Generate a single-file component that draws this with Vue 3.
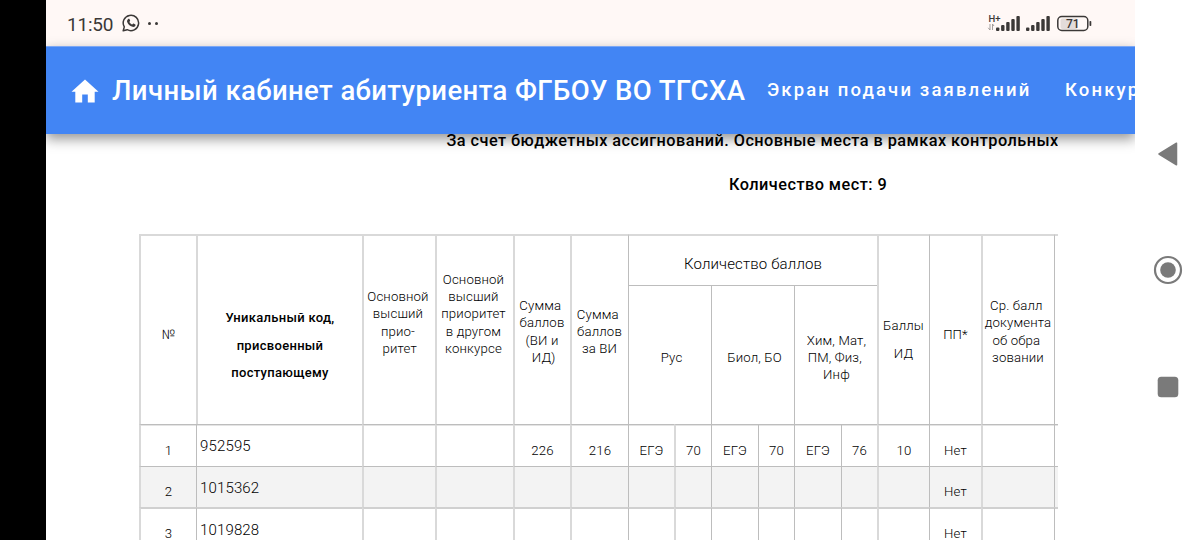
<template>
  <div class="device">
    <div class="cutout"></div>

    <div class="screen">
      <div class="status-bar">
        <span class="clock">11:50</span>
        <svg class="whatsapp" viewBox="0 0 18 18">
          <path d="M1.2 16.8 L2.3 12.9 A7.7 7.7 0 1 1 5.2 15.7 Z" fill="none" stroke="#3b3837" stroke-width="1.5" stroke-linejoin="round" />
          <path d="M6.2 4.9c.4-.4 1-.3 1.2.1l.7 1.6c.1.3 0 .5-.7 1.3.7 1.3 1.6 2.1 2.9 2.7.8-1 1-1.1 1.3-1l1.7.8c.4.2.3 1.3-.2 1.8-.7.7-1.7.9-2.7.6-2.6-.7-4.5-2.6-5.2-4.7-.4-1.3 0-2.4 1-3.2z" fill="#3b3837" />
        </svg>
        <span class="dots"><i></i><i></i></span>

        <svg class="signals" viewBox="0 0 106 22">
          <text x="1.5" y="9.5" class="net">H+</text>
          <path d="M3 12v6M3 18l-1.8-2.2M5.500 18v-6M5.500 12l1.500 2" stroke="#9a9594" stroke-width="0.9" fill="none" />
          <g fill="#3b3837">
            <rect v-for="(bar, i) in bars" :key="'a' + i" :x="9 + i * 5.1" :y="19 - bar" width="3.4" :height="bar" rx="1" />
            <rect v-for="(bar, i) in bars" :key="'b' + i" :x="39 + i * 5.1" :y="19 - bar" width="3.4" :height="bar" rx="1" />
          </g>
          <rect x="73.5" y="6.5" width="17" height="10.5" rx="2" fill="#e3dcda" />
          <rect x="70.8" y="4.5" width="30" height="14" rx="4" fill="none" stroke="#3b3837" stroke-width="1.5" />
          <rect x="102.5" y="9" width="1.8" height="5" rx="0.8" fill="#3b3837" />
          <text x="85.8" y="15.8" class="charge">71</text>
        </svg>
      </div>

      <header class="app-bar">
        <svg class="home" viewBox="0 0 28 24">
          <path d="M14 0.5 L0.5 12.7 H4.3 V23.5 H11.2 V15.5 H16.8 V23.5 H23.7 V12.7 H27.5 Z" fill="#fff" />
        </svg>
        <h1>Личный кабинет абитуриента ФГБОУ ВО ТГСХА</h1>
        <nav>
          <a class="nav-submit">Экран подачи заявлений</a>
          <a>Конкурс</a>
        </nav>
      </header>

      <main>
        <p class="funding">За счет бюджетных ассигнований. Основные места в рамках контрольных</p>
        <p class="places">Количество мест: 9</p>

        <div class="table">
          <div
            v-for="(h, i) in headers"
            :key="'h' + i"
            class="cell head"
            :class="['h-' + h.id, { soft: h.soft }]"
          ><span>{{ h.text }}</span></div>

          <template v-for="(row, r) in rows" :key="r">
            <div
              v-for="(value, c) in row"
              :key="c"
              class="cell body"
              :class="{ soft: softColumns.includes(c), code: c === 1, even: r === 1, wide: r === 2, first: r === 0 }"
            ><span>{{ value }}</span></div>
          </template>
        </div>
      </main>
    </div>

    <aside class="nav-buttons">
      <svg viewBox="0 0 30 30"><path d="M6 15 L23.5 4.2 V25.8 Z" fill="#7a7a7a" stroke="#7a7a7a" stroke-width="1.5" stroke-linejoin="round" /></svg>
      <svg viewBox="0 0 30 30">
        <circle cx="15" cy="15" r="13" fill="none" stroke="#7a7a7a" stroke-width="2.2" />
        <circle cx="15" cy="15" r="7.8" fill="#7a7a7a" />
      </svg>
      <svg viewBox="0 0 30 30"><rect x="4.7" y="4.7" width="20.6" height="20.6" rx="3.5" fill="#7a7a7a" /></svg>
    </aside>
  </div>
</template>

<script setup>
const bars = [3.5, 6, 9, 12, 15];

const headers = [
  { id: 'num', text: '№', soft: true },
  { id: 'code', text: 'Уникальный код,\nприсвоенный\nпоступающему', soft: true },
  { id: 'prio', text: 'Основной\nвысший\nприо-\n ритет', soft: true },
  { id: 'other', text: 'Основной\nвысший\nприоритет\nв другом\nконкурсе', soft: true },
  { id: 'sum', text: 'Сумма \nбаллов\n(ВИ и\n ИД)', soft: true },
  { id: 'sumvi', text: 'Сумма \nбаллов\nза ВИ', soft: true },
  { id: 'scores', text: 'Количество баллов' },
  { id: 'id', text: 'Баллы\nИД', soft: true },
  { id: 'pp', text: 'ПП*' },
  { id: 'avg', text: 'Ср. балл \nдокумента\nоб обра \nзовании', soft: true },
  { id: 'rest', text: '' },
  { id: 'rus', text: 'Рус' },
  { id: 'bio', text: 'Биол, БО' },
  { id: 'chem', text: 'Хим, Мат,\nПМ, Физ, \nИнф' },
];

// columns whose left rule is drawn two pixels wide
const softColumns = [0, 2, 3, 4, 5, 7, 12, 14];

const rows = [
  ['1', '952595', '', '', '226', '216', 'ЕГЭ', '70', 'ЕГЭ', '70', 'ЕГЭ', '76', '10', 'Нет', '', ''],
  ['2', '1015362', '', '', '', '', '', '', '', '', '', '', '', 'Нет', '', ''],
  ['3', '1019828', '', '', '', '', '', '', '', '', '', '', '', 'Нет', '', ''],
];
</script>

<style>
body {
  margin: 0;
  overflow: hidden;
}
</style>

<style scoped>
.device {
  display: flex;
  width: 1200px;
  height: 540px;
  overflow: hidden;
  background: #fff;
  font-family: Roboto, 'Liberation Sans', sans-serif;
}

.cutout {
  width: 46px;
  flex: none;
  background: #000;
}

.screen {
  width: 1089px;
  flex: none;
  display: flex;
  flex-direction: column;
  overflow: hidden;
  background: #fff;
}

.status-bar {
  height: 46px;
  flex: none;
  display: flex;
  align-items: center;
  box-sizing: border-box;
  padding: 0 42px 0 21px;
  background: #fff8f6;
  color: #3b3837;
}

.clock {
  font-size: 19px;
  letter-spacing: -0.2px;
  padding-top: 2px;
}

.whatsapp {
  width: 18px;
  height: 18px;
  margin-left: 9px;
}

.dots {
  display: flex;
  gap: 4px;
  margin-left: 8px;
}

.dots i {
  width: 3px;
  height: 3px;
  border-radius: 50%;
  background: #3b3837;
}

.signals {
  width: 106px;
  height: 22px;
  margin-left: auto;
}

.net {
  font-size: 9.5px;
  font-weight: 500;
  fill: #3b3837;
}

.charge {
  font-size: 12px;
  font-weight: 500;
  text-anchor: middle;
  fill: #3b3837;
}

.app-bar {
  position: relative;
  z-index: 1;
  height: 88px;
  flex: none;
  display: flex;
  align-items: center;
  box-sizing: border-box;
  padding-left: 25px;
  border-top: 1px solid #7ba7f5;
  background: #4285f4;
  color: #fff;
  white-space: nowrap;
  box-shadow: 0 5px 12px rgba(0, 0, 0, 0.42);
}

.home {
  width: 28px;
  height: 24px;
  flex: none;
}

h1 {
  margin: 0 0 0 13px;
  width: 655px;
  flex: none;
  font-size: 27.5px;
  font-weight: 500;
  letter-spacing: 0.4px;
  line-height: 32px;
  padding-top: 1px;
}

nav {
  display: flex;
  padding-bottom: 2px;
  font-size: 18.5px;
  font-weight: 500;
  letter-spacing: 2.13px;
}

.nav-submit {
  width: 298px;
  flex: none;
}

main {
  flex: 1;
  min-height: 0;
  width: 919px;
  margin-left: 93px;
  overflow: hidden;
}

p {
  margin: 0;
  font-size: 16.3px;
  font-weight: 500;
  letter-spacing: 0.46px;
  color: #000;
  white-space: nowrap;
}

.funding {
  height: 28px;
  line-height: 14px;
  padding-left: 307.5px;
}

.places {
  height: 72px;
  line-height: 46px;
  padding-left: 590px;
}

.table {
  display: grid;
  grid-template-columns: 57px 166px 73px 78px 57px 58px 46px 37px 47px 36px 47px 36px 52px 52px 73px 4px;
  grid-template-rows: 51px 139px 42px 41px 42px;
  color: #000;
}

.cell {
  display: flex;
  align-items: center;
  justify-content: center;
  box-sizing: border-box;
  min-width: 0;
  border-left: 1px solid #bdbdbd;
  border-top: 1px solid #bdbdbd;
  font-size: 13.2px;
  font-weight: 350;
  line-height: 17.1px;
  letter-spacing: 0.15px;
  text-align: center;
  white-space: pre;
}

.head {
  grid-row: 1 / 3;
  border-top: 2px solid #d9d9d9;
}

.soft {
  border-left: 2px solid #d9d9d9;
}

.h-num,
.h-pp {
  padding-top: 10px;
}

.h-code {
  font-size: 13px;
  font-weight: 500;
  line-height: 27.7px;
  letter-spacing: 0.3px;
  padding-top: 31px;
  color: #000;
}

.h-prio {
  padding: 0 3px 15px 0;
}

.h-other {
  padding: 0 3px 32px 0;
}

.h-sum,
.h-sumvi,
.h-avg {
  padding: 3px 1px 0 0;
}

.h-id {
  line-height: 27.7px;
  padding: 20px 1px 0 0;
}

.h-scores {
  grid-row: 1;
  grid-column: 7 / 13;
  font-size: 15px;
  padding-top: 8px;
}

.h-rus,
.h-bio,
.h-chem {
  grid-row: 2;
  border-top: 1px solid #bdbdbd;
  padding: 5px 0 0 3px;
}

.h-rus {
  grid-column: 7 / 9;
}

.h-bio {
  grid-column: 9 / 11;
}

.h-chem {
  grid-column: 11 / 13;
  padding-left: 1px;
}

.body {
  padding-top: 10px;
}

.first {
  box-shadow: inset 0 1px 0 #e4e4e4;
}

.even {
  background: #f3f3f3;
}

.wide {
  border-top: 2px solid #d0d0d0;
}

.code {
  justify-content: flex-start;
  padding: 3px 0 0 3px;
  font-size: 15px;
}

.nav-buttons {
  flex: 1;
  display: flex;
  flex-direction: column;
  align-items: center;
  gap: 86.5px;
  padding-top: 138.5px;
}

.nav-buttons svg {
  width: 30px;
  height: 30px;
  flex: none;
}
</style>
